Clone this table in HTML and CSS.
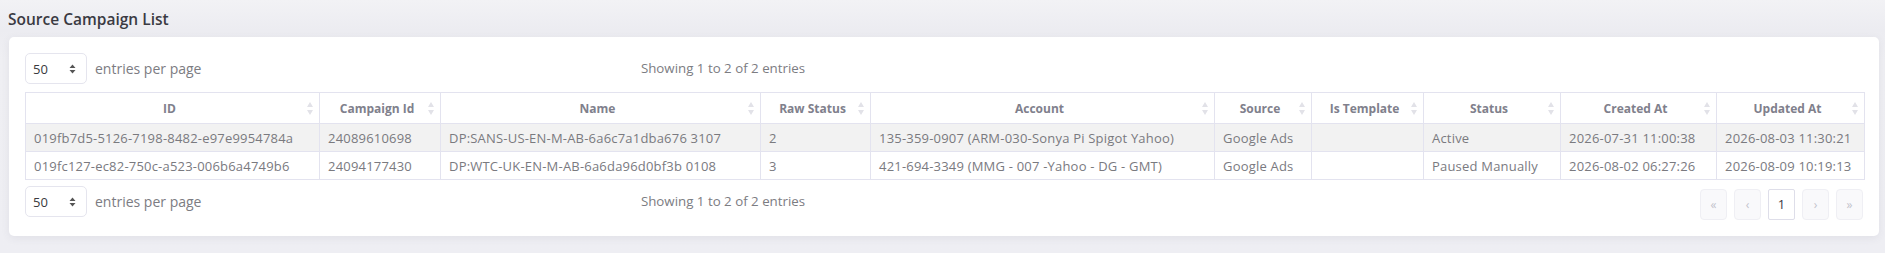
FILE: index.html
```html
<!DOCTYPE html>
<html lang="en">
<head>
<meta charset="utf-8">
<title>Source Campaign List</title>
<link rel="stylesheet" href="styles.css">
</head>
<body>
<div class="page">
  <h1 class="page-title">Source Campaign List</h1>
  <div class="card">
    <div class="dt-bar dt-top">
      <div class="dt-length">
        <div class="dt-select"><span>50</span><svg class="dt-caret" width="7" height="10" viewBox="0 0 7 10"><path d="M3.5 0.5 L6.5 4 H0.5 Z M3.5 9.5 L6.5 6 H0.5 Z" fill="#555"/></svg></div>
        <span class="dt-label">entries per page</span>
      </div>
      <div class="dt-info">Showing 1 to 2 of 2 entries</div>
      <div></div>
    </div>
    <table class="dt-table">
      <colgroup>
        <col class="c-id"><col class="c-cid"><col class="c-name"><col class="c-raw"><col class="c-acc"><col class="c-src"><col class="c-tpl"><col class="c-status"><col class="c-created"><col class="c-updated">
      </colgroup>
      <thead>
        <tr>
          <th>ID<i class="sort"></i></th>
          <th>Campaign Id<i class="sort"></i></th>
          <th>Name<i class="sort"></i></th>
          <th>Raw Status<i class="sort"></i></th>
          <th>Account<i class="sort"></i></th>
          <th>Source<i class="sort"></i></th>
          <th>Is Template<i class="sort"></i></th>
          <th>Status<i class="sort"></i></th>
          <th>Created At<i class="sort"></i></th>
          <th>Updated At<i class="sort"></i></th>
        </tr>
      </thead>
      <tbody>
        <tr class="odd">
          <td>019fb7d5-5126-7198-8482-e97e9954784a</td>
          <td>24089610698</td>
          <td>DP:SANS-US-EN-M-AB-6a6c7a1dba676 3107</td>
          <td>2</td>
          <td>135-359-0907 (ARM-030-Sonya Pi Spigot Yahoo)</td>
          <td>Google Ads</td>
          <td></td>
          <td>Active</td>
          <td>2026-07-31 11:00:38</td>
          <td>2026-08-03 11:30:21</td>
        </tr>
        <tr>
          <td>019fc127-ec82-750c-a523-006b6a4749b6</td>
          <td>24094177430</td>
          <td>DP:WTC-UK-EN-M-AB-6a6da96d0bf3b 0108</td>
          <td>3</td>
          <td>421-694-3349 (MMG - 007 -Yahoo - DG - GMT)</td>
          <td>Google Ads</td>
          <td></td>
          <td>Paused Manually</td>
          <td>2026-08-02 06:27:26</td>
          <td>2026-08-09 10:19:13</td>
        </tr>
      </tbody>
    </table>
    <div class="dt-bar dt-bottom">
      <div class="dt-length">
        <div class="dt-select"><span>50</span><svg class="dt-caret" width="7" height="10" viewBox="0 0 7 10"><path d="M3.5 0.5 L6.5 4 H0.5 Z M3.5 9.5 L6.5 6 H0.5 Z" fill="#555"/></svg></div>
        <span class="dt-label">entries per page</span>
      </div>
      <div class="dt-info">Showing 1 to 2 of 2 entries</div>
      <ul class="pager">
        <li class="pg disabled">«</li>
        <li class="pg disabled">‹</li>
        <li class="pg active">1</li>
        <li class="pg disabled">›</li>
        <li class="pg disabled">»</li>
      </ul>
    </div>
  </div>
</div>
</body>
</html>
```
FILE: styles.css
```css
html, body {
  margin: 0;
  padding: 0;
  overflow: hidden;
}
body {
  background: linear-gradient(#f2f2f5 0px, #ececf1 30px, #efeff3 60px, #eeeef3 100%);
  font-family: "Open Sans", "Liberation Sans", sans-serif;
  color: #77777c;
  width: 1885px;
  height: 253px;
}
.page {
  padding: 8px 6px 0 9px;
}
.page-title {
  margin: 0 0 0 -1px;
  height: 29px;
  font-size: 15.5px;
  font-weight: 600;
  color: #3a3a42;
  line-height: 22px;
}
.card {
  width: 1838px;
  background: #fff;
  border-radius: 5px;
  box-shadow: 0 2px 8px rgba(60, 60, 90, 0.08);
  padding: 16px;
}
.dt-bar {
  display: grid;
  grid-template-columns: 506px 384px 1fr;
  align-items: center;
}
.dt-top {
  height: 31px;
  margin-bottom: 8px;
}
.dt-bottom {
  margin-top: 6px;
  height: 34px;
  align-items: start;
}
.dt-length {
  display: flex;
  align-items: center;
  gap: 8px;
}
.dt-select {
  border: 1px solid #e5e5ee;
  border-radius: 5px;
  display: flex;
  align-items: center;
  justify-content: space-between;
  padding: 0 10px 0 7px;
  box-sizing: border-box;
  width: 62px;
  height: 31px;
  font-size: 13px;
  color: #3a3a40;
}
.dt-caret {
  display: block;
}
.dt-label {
  font-size: 14px;
  color: #7c7c82;
}
.dt-info {
  font-size: 13.3px;
  color: #7c7c82;
  text-align: center;
  line-height: 31px;
}
.dt-table {
  width: 1839px;
  border-collapse: collapse;
  table-layout: fixed;
  font-size: 13px;
  letter-spacing: 0.2px;
}
.c-id { width: 294px; }
.c-cid { width: 121px; }
.c-name { width: 320px; }
.c-raw { width: 110px; }
.c-acc { width: 344px; }
.c-src { width: 97px; }
.c-tpl { width: 112px; }
.c-status { width: 137px; }
.c-created { width: 156px; }
.c-updated { width: 148px; }
.dt-table th,
.dt-table td {
  border: 1px solid #e3e3ef;
  white-space: nowrap;
  overflow: hidden;
}
.dt-table th {
  position: relative;
  height: 30px;
  padding: 0 14px 0 8px;
  font-size: 12px;
  font-weight: 700;
  letter-spacing: 0;
  color: #80808c;
  text-align: center;
}
.dt-table td {
  height: 27px;
  padding: 0 8px;
  color: #7a7a7f;
}
.dt-table tr.odd td {
  background: #f2f2f2;
}
.sort {
  position: absolute;
  right: 6px;
  top: 9px;
  width: 6px;
  height: 13px;
}
.sort::before,
.sort::after {
  content: "";
  position: absolute;
  left: 0;
  border-left: 3.5px solid transparent;
  border-right: 3.5px solid transparent;
}
.sort::before {
  top: 0;
  border-bottom: 5px solid #e2e2e8;
}
.sort::after {
  bottom: 0;
  border-top: 5px solid #e2e2e8;
}
.pager {
  list-style: none;
  margin: 3px 0 0 0;
  padding: 0;
  display: flex;
  justify-content: flex-end;
  gap: 7px;
}
.pg {
  width: 25px;
  height: 29px;
  border: 1px solid #efeff4;
  border-radius: 4px;
  background: #f9f9fb;
  font-size: 12px;
  line-height: 29px;
  text-align: center;
  color: #c3c3cc;
}
.pg.active {
  background: #fff;
  border-color: #dedee9;
  border-radius: 2px;
  color: #3a3a44;
  font-size: 13px;
}
```
